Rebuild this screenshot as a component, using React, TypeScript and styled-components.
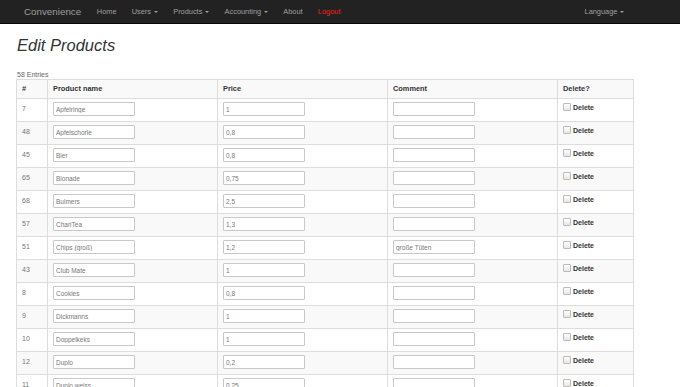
import styled, { createGlobalStyle } from "styled-components";

type Product = {
  id: number;
  name: string;
  price: string;
  comment: string;
};

const products: Product[] = [
  { id: 7, name: "Apfelringe", price: "1", comment: "" },
  { id: 48, name: "Apfelschorle", price: "0,8", comment: "" },
  { id: 45, name: "Bier", price: "0,8", comment: "" },
  { id: 65, name: "Bionade", price: "0,75", comment: "" },
  { id: 68, name: "Bulmers", price: "2,5", comment: "" },
  { id: 57, name: "ChariTea", price: "1,3", comment: "" },
  { id: 51, name: "Chips (groß)", price: "1,2", comment: "große Tüten" },
  { id: 43, name: "Club Mate", price: "1", comment: "" },
  { id: 8, name: "Cookies", price: "0,8", comment: "" },
  { id: 9, name: "Dickmanns", price: "1", comment: "" },
  { id: 10, name: "Doppelkeks", price: "1", comment: "" },
  { id: 12, name: "Duplo", price: "0,2", comment: "" },
  { id: 11, name: "Duplo weiss", price: "0,25", comment: "" },
];

const navItems = [
  { label: "Home" },
  { label: "Users", dropdown: true },
  { label: "Products", dropdown: true },
  { label: "Accounting", dropdown: true },
  { label: "About" },
  { label: "Logout", danger: true },
];

// column widths as in the screenshot
const columns = [31, 170, 170, 170, 76];

const App = () => {
  return (
    <>
      <GlobalStyle />
      <Navbar>
        <NavContainer>
          <Brand>Convenience</Brand>
          <NavList>
            {navItems.map((item) => (
              <NavItem key={item.label} $danger={item.danger}>
                {item.label}
                {item.dropdown && <Caret />}
              </NavItem>
            ))}
          </NavList>
          <NavRight>
            <NavItem>
              Language
              <Caret />
            </NavItem>
          </NavRight>
        </NavContainer>
      </Navbar>
      <Main>
        <Title>Edit Products</Title>
        <Count>58 Entries</Count>
        <Table>
          <colgroup>
            {columns.map((w, i) => (
              <col key={i} style={{ width: w }} />
            ))}
          </colgroup>
          <tbody>
            <Row>
              <HeadCell>#</HeadCell>
              <HeadCell>Product name</HeadCell>
              <HeadCell>Price</HeadCell>
              <HeadCell>Comment</HeadCell>
              <HeadCell>Delete?</HeadCell>
            </Row>
            {products.map((p) => (
              <Row key={p.id}>
                <Cell>{p.id}</Cell>
                <Cell>
                  <TextInput defaultValue={p.name} />
                </Cell>
                <Cell>
                  <TextInput defaultValue={p.price} />
                </Cell>
                <Cell>
                  <TextInput defaultValue={p.comment} />
                </Cell>
                <Cell>
                  <DeleteLabel>
                    <Check />
                    Delete
                  </DeleteLabel>
                </Cell>
              </Row>
            ))}
          </tbody>
        </Table>
      </Main>
    </>
  );
};

export default App;

const GlobalStyle = createGlobalStyle`
  body {
    margin: 0;
    background: #fff;
    font-family: "Liberation Sans", Arial, sans-serif;
    color: #333;
  }
`;

const Navbar = styled.div`
  height: 23px;
  background: #222;
  border-bottom: 1px solid #080808;
`;

const NavContainer = styled.div`
  width: 617px;
  margin-left: 16px;
  padding: 0 8px;
  box-sizing: border-box;
  height: 100%;
  display: flex;
  align-items: center;
`;

const Brand = styled.div`
  font-size: 9.8px;
  color: #9d9d9d;
  margin-right: 8px;
`;

const NavList = styled.div`
  display: flex;
  align-items: center;
`;

const NavRight = styled.div`
  margin-left: auto;
  display: flex;
  align-items: center;
  margin-right: -7px;
`;

const NavItem = styled.div<{ $danger?: boolean }>`
  font-size: 7.4px;
  padding: 0 7.6px;
  color: ${({ $danger }) => ($danger ? "#ff1a1a" : "#a0a0a0")};
  display: flex;
  align-items: center;
`;

const Caret = styled.span`
  display: inline-block;
  margin-left: 3px;
  width: 0;
  height: 0;
  border-left: 2px solid transparent;
  border-right: 2px solid transparent;
  border-top: 2px solid #9d9d9d;
`;

const Main = styled.div`
  padding: 0 16px;
`;

const Title = styled.h1`
  margin: 11px 0 0 1px;
  font-size: 16.5px;
  font-weight: normal;
  font-style: italic;
  line-height: 20px;
  color: #333;
`;

const Count = styled.div`
  margin-top: 15px;
  font-size: 7px;
  line-height: 9px;
  color: #666;
  padding-left: 1px;
`;

const Table = styled.table`
  width: 617px;
  table-layout: fixed;
  border-collapse: collapse;
  border: 1px solid #ddd;
`;

const Row = styled.tr`
  &:nth-child(odd) {
    background: #f9f9f9;
  }
`;

const HeadCell = styled.td`
  border: 1px solid #ddd;
  padding: 4px 5px;
  font-size: 7.4px;
  line-height: 10px;
  font-weight: bold;
  color: #333;
  text-align: left;
  vertical-align: top;
`;

const Cell = styled.td`
  border: 1px solid #ddd;
  padding: 3px 5px 5px;
  font-size: 7px;
  line-height: 14px;
  color: #777;
  vertical-align: top;
`;

const TextInput = styled.input`
  display: block;
  box-sizing: border-box;
  width: 82px;
  height: 14px;
  margin: 0;
  padding: 0 2px;
  border: 1px solid #c8c8c8;
  border-radius: 1px;
  background: #fff;
  font-family: "Liberation Sans", Arial, sans-serif;
  font-size: 6.5px;
  color: #777;
  outline: none;
`;

const DeleteLabel = styled.span`
  display: flex;
  align-items: center;
  font-size: 7px;
  font-weight: bold;
  color: #333;
  line-height: 14px;
  margin-top: -1px;
`;

const Check = styled.span`
  display: inline-block;
  width: 6px;
  height: 6px;
  margin-right: 2px;
  margin-top: -2px;
  border: 1px solid #bbb;
  border-radius: 1px;
  background: linear-gradient(#fff, #e6e6e6);
`;
